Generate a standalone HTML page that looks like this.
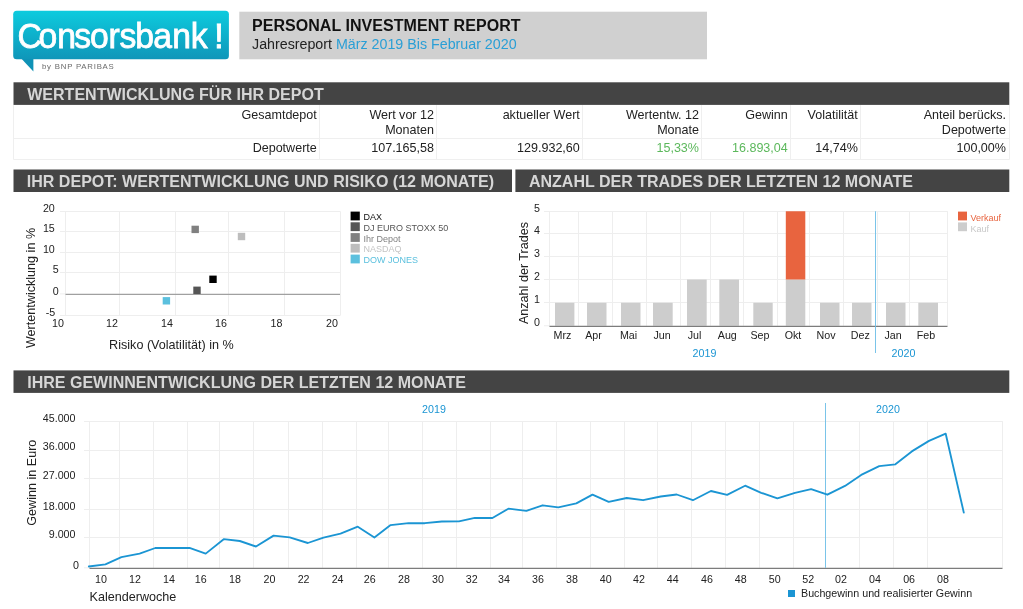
<!DOCTYPE html>
<html lang="de"><head><meta charset="utf-8"><title>Personal Investment Report</title>
<style>
html,body{margin:0;padding:0;background:#fff;}
body{width:1023px;height:609px;overflow:hidden;font-family:"Liberation Sans",Arial,sans-serif;}
svg{display:block;position:absolute;left:0;top:0;will-change:transform;}
text{font-family:"Liberation Sans",Arial,sans-serif;}
.h{font-weight:bold;font-size:16.05px;fill:#d6d6d6;}
.t{font-size:12.55px;fill:#222;}
.g{font-size:12.55px;fill:#5cb85c;}
.ax{font-size:10.7px;fill:#222;}
.al{font-size:12.6px;fill:#222;}
.lg{font-size:9px;}
.yr{font-size:10.7px;fill:#1b95d3;}
</style></head><body>
<svg width="1023" height="609" viewBox="0 0 1023 609">
<defs><linearGradient id="lg1" x1="0" y1="0" x2="0" y2="1"><stop offset="0" stop-color="#0dcbde"/><stop offset="1" stop-color="#0f96b9"/></linearGradient></defs>

<polygon points="20.8,58 33.4,58 33.4,71.6" fill="#0f92b6"/>
<rect x="13.2" y="10.8" width="215.7" height="48.5" rx="3.5" ry="3.5" fill="url(#lg1)"/>
<text transform="translate(0,47.8) scale(0.95,1)" x="18.4 40.6 60.2 78.2 94.7 114.3 125.7 142.4 161.3 181.2 200.9" y="0" font-size="35.5" fill="#fff" stroke="#fff" stroke-width="0.8">Consorsbank</text>
<text x="213.9" y="47.6" font-size="35.5" fill="#fff" stroke="#fff" stroke-width="0.8">!</text>
<text x="42" y="69" font-size="7.8" fill="#6a6a6a" textLength="71.8" lengthAdjust="spacing">by BNP PARIBAS</text>
<rect x="239.3" y="11.7" width="467.7" height="47.6" fill="#d0d0d0"/>
<text x="252" y="31.2" font-size="16" font-weight="bold" fill="#111" letter-spacing="0.05">PERSONAL INVESTMENT REPORT</text>
<text x="252" y="48.8" font-size="14.25" fill="#222">Jahresreport <tspan fill="#2a9fd6">März 2019 Bis Februar 2020</tspan></text>
<rect x="13.5" y="82.3" width="995.8" height="22.6" fill="#444"/>
<text class="h" x="27.2" y="100.2">WERTENTWICKLUNG FÜR IHR DEPOT</text>
<rect x="13.5" y="169.5" width="498.5" height="22.5" fill="#444"/>
<text class="h" x="26.8" y="187.3">IHR DEPOT: WERTENTWICKLUNG UND RISIKO (12 MONATE)</text>
<rect x="515.4" y="169.5" width="493.9" height="22.5" fill="#444"/>
<text class="h" x="528.9" y="187.3">ANZAHL DER TRADES DER LETZTEN 12 MONATE</text>
<rect x="13.5" y="370.4" width="995.8" height="22.5" fill="#444"/>
<text class="h" x="27.2" y="388.2">IHRE GEWINNENTWICKLUNG DER LETZTEN 12 MONATE</text>
<g stroke="#efefef" stroke-width="1" fill="none">
<path d="M13.5,105V159.5H1009.5V105"/>
<line x1="13.5" y1="138.5" x2="1009" y2="138.5"/>
<line x1="319.5" y1="105" x2="319.5" y2="159"/>
<line x1="436.5" y1="105" x2="436.5" y2="159"/>
<line x1="582.5" y1="105" x2="582.5" y2="159"/>
<line x1="701.5" y1="105" x2="701.5" y2="159"/>
<line x1="790.5" y1="105" x2="790.5" y2="159"/>
<line x1="860.5" y1="105" x2="860.5" y2="159"/>
</g>
<text class="t" text-anchor="end" x="316.8" y="118.7">Gesamtdepot</text>
<text class="t" text-anchor="end" x="316.8" y="152">Depotwerte</text>
<text class="t" text-anchor="end" x="434" y="118.7">Wert vor 12</text>
<text class="t" text-anchor="end" x="434" y="133.8">Monaten</text>
<text class="t" text-anchor="end" x="434" y="152">107.165,58</text>
<text class="t" text-anchor="end" x="579.8" y="118.7">aktueller Wert</text>
<text class="t" text-anchor="end" x="579.8" y="152">129.932,60</text>
<text class="t" text-anchor="end" x="699" y="118.7">Wertentw. 12</text>
<text class="t" text-anchor="end" x="699" y="133.8">Monate</text>
<text class="g" text-anchor="end" x="699" y="152">15,33%</text>
<text class="t" text-anchor="end" x="787.8" y="118.7">Gewinn</text>
<text class="g" text-anchor="end" x="787.8" y="152">16.893,04</text>
<text class="t" text-anchor="end" x="857.8" y="118.7">Volatilität</text>
<text class="t" text-anchor="end" x="857.8" y="152">14,74%</text>
<text class="t" text-anchor="end" x="1006" y="118.7">Anteil berücks.</text>
<text class="t" text-anchor="end" x="1006" y="133.8">Depotwerte</text>
<text class="t" text-anchor="end" x="1006" y="152">100,00%</text>
<g stroke="#eeeeee" stroke-width="1">
<line x1="60.0" y1="211.5" x2="340.0" y2="211.5"/>
<line x1="60.0" y1="231.5" x2="340.0" y2="231.5"/>
<line x1="60.0" y1="252.5" x2="340.0" y2="252.5"/>
<line x1="60.0" y1="272.5" x2="340.0" y2="272.5"/>
<line x1="60.0" y1="315.5" x2="340.0" y2="315.5"/>
<line x1="65.5" y1="211.3" x2="65.5" y2="315.6"/>
<line x1="119.5" y1="211.3" x2="119.5" y2="315.6"/>
<line x1="175.5" y1="211.3" x2="175.5" y2="315.6"/>
<line x1="228.5" y1="211.3" x2="228.5" y2="315.6"/>
<line x1="284.5" y1="211.3" x2="284.5" y2="315.6"/>
<line x1="340.5" y1="211.3" x2="340.5" y2="315.6"/>
</g>
<line x1="60.0" y1="293.9" x2="65.5" y2="293.9" stroke="#eeeeee" stroke-width="1"/>
<line x1="65.5" y1="294.3" x2="340.0" y2="294.3" stroke="#a0a0a0" stroke-width="1.15"/>
<text class="ax" text-anchor="end" x="54.8" y="211.9">20</text>
<text class="ax" text-anchor="end" x="54.8" y="231.9">15</text>
<text class="ax" text-anchor="end" x="54.8" y="253.3">10</text>
<text class="ax" text-anchor="end" x="58.8" y="273.4">5</text>
<text class="ax" text-anchor="end" x="58.8" y="294.5">0</text>
<text class="ax" text-anchor="end" x="55.3" y="316.2">-5</text>
<text class="ax" text-anchor="middle" x="58" y="326.5">10</text>
<text class="ax" text-anchor="middle" x="112" y="326.5">12</text>
<text class="ax" text-anchor="middle" x="167" y="326.5">14</text>
<text class="ax" text-anchor="middle" x="221" y="326.5">16</text>
<text class="ax" text-anchor="middle" x="276.5" y="326.5">18</text>
<text class="ax" text-anchor="middle" x="332" y="326.5">20</text>
<text class="al" text-anchor="middle" x="171.4" y="349">Risiko (Volatilität) in %</text>
<text class="al" text-anchor="middle" transform="translate(35.2,288) rotate(-90)">Wertentwicklung in %</text>
<rect x="191.5" y="225.7" width="7.4" height="7.4" fill="#808080"/>
<rect x="237.8" y="232.8" width="7.4" height="7.4" fill="#bdbdbd"/>
<rect x="209.3" y="275.6" width="7.4" height="7.4" fill="#000"/>
<rect x="193.3" y="286.6" width="7.4" height="7.4" fill="#555"/>
<rect x="162.7" y="297.1" width="7.4" height="7.4" fill="#5bc0de"/>
<rect x="350.6" y="211.6" width="9.2" height="8.8" fill="#000"/>
<text class="lg" x="363.5" y="220.2" fill="#111">DAX</text>
<rect x="350.6" y="222.3" width="9.2" height="8.8" fill="#555"/>
<text class="lg" x="363.5" y="230.9" fill="#555">DJ EURO STOXX 50</text>
<rect x="350.6" y="233.1" width="9.2" height="8.8" fill="#808080"/>
<text class="lg" x="363.5" y="241.7" fill="#808080">Ihr Depot</text>
<rect x="350.6" y="243.8" width="9.2" height="8.8" fill="#bdbdbd"/>
<text class="lg" x="363.5" y="252.4" fill="#c4c4c4">NASDAQ</text>
<rect x="350.6" y="254.6" width="9.2" height="8.8" fill="#5bc0de"/>
<text class="lg" x="363.5" y="263.2" fill="#5bc0de">DOW JONES</text>
<g stroke="#eeeeee" stroke-width="1">
<line x1="544.0" y1="211.5" x2="947.5" y2="211.5"/>
<line x1="544.0" y1="233.5" x2="947.5" y2="233.5"/>
<line x1="544.0" y1="256.5" x2="947.5" y2="256.5"/>
<line x1="544.0" y1="279.5" x2="947.5" y2="279.5"/>
<line x1="544.0" y1="302.5" x2="947.5" y2="302.5"/>
<line x1="549.5" y1="211.25" x2="549.5" y2="325.75"/>
<line x1="578.5" y1="211.25" x2="578.5" y2="325.75"/>
<line x1="612.5" y1="211.25" x2="612.5" y2="325.75"/>
<line x1="646.5" y1="211.25" x2="646.5" y2="325.75"/>
<line x1="680.5" y1="211.25" x2="680.5" y2="325.75"/>
<line x1="710.5" y1="211.25" x2="710.5" y2="325.75"/>
<line x1="743.5" y1="211.25" x2="743.5" y2="325.75"/>
<line x1="777.5" y1="211.25" x2="777.5" y2="325.75"/>
<line x1="809.5" y1="211.25" x2="809.5" y2="325.75"/>
<line x1="843.5" y1="211.25" x2="843.5" y2="325.75"/>
<line x1="877.5" y1="211.25" x2="877.5" y2="325.75"/>
<line x1="909.5" y1="211.25" x2="909.5" y2="325.75"/>
<line x1="947.5" y1="211.25" x2="947.5" y2="325.75"/>
</g>
<rect x="555" y="302.75" width="19.4" height="23.00" fill="#cdcdcd"/>
<rect x="587" y="302.75" width="19.5" height="23.00" fill="#cdcdcd"/>
<rect x="621" y="302.75" width="19.5" height="23.00" fill="#cdcdcd"/>
<rect x="653" y="302.75" width="19.7" height="23.00" fill="#cdcdcd"/>
<rect x="687" y="279.5" width="19.7" height="46.25" fill="#cdcdcd"/>
<rect x="719.3" y="279.5" width="19.7" height="46.25" fill="#cdcdcd"/>
<rect x="753.3" y="302.75" width="19.4" height="23.00" fill="#cdcdcd"/>
<rect x="785.8" y="279.5" width="19.5" height="46.25" fill="#cdcdcd"/>
<rect x="820" y="302.75" width="19.5" height="23.00" fill="#cdcdcd"/>
<rect x="852" y="302.75" width="19.5" height="23.00" fill="#cdcdcd"/>
<rect x="886" y="302.75" width="19.5" height="23.00" fill="#cdcdcd"/>
<rect x="918.3" y="302.75" width="19.7" height="23.00" fill="#cdcdcd"/>
<rect x="785.8" y="211.25" width="19.5" height="68.25" fill="#e8643f"/>
<line x1="544.0" y1="325.75" x2="549.5" y2="325.75" stroke="#eeeeee" stroke-width="1"/>
<line x1="549.5" y1="326.4" x2="947.5" y2="326.4" stroke="#7c7c7c" stroke-width="1.1"/>
<line x1="875.5" y1="211.25" x2="875.5" y2="353" stroke="#6bbde6" stroke-width="0.9"/>
<text class="ax" text-anchor="end" x="540" y="211.9">5</text>
<text class="ax" text-anchor="end" x="540" y="233.9">4</text>
<text class="ax" text-anchor="end" x="540" y="257.2">3</text>
<text class="ax" text-anchor="end" x="540" y="280.2">2</text>
<text class="ax" text-anchor="end" x="540" y="303.4">1</text>
<text class="ax" text-anchor="end" x="540" y="326.4">0</text>
<text class="ax" text-anchor="middle" x="562.5" y="339">Mrz</text>
<text class="ax" text-anchor="middle" x="593.5" y="339">Apr</text>
<text class="ax" text-anchor="middle" x="628.5" y="339">Mai</text>
<text class="ax" text-anchor="middle" x="662" y="339">Jun</text>
<text class="ax" text-anchor="middle" x="694.5" y="339">Jul</text>
<text class="ax" text-anchor="middle" x="727.3" y="339">Aug</text>
<text class="ax" text-anchor="middle" x="760" y="339">Sep</text>
<text class="ax" text-anchor="middle" x="793" y="339">Okt</text>
<text class="ax" text-anchor="middle" x="826" y="339">Nov</text>
<text class="ax" text-anchor="middle" x="860.3" y="339">Dez</text>
<text class="ax" text-anchor="middle" x="893" y="339">Jan</text>
<text class="ax" text-anchor="middle" x="926" y="339">Feb</text>
<text class="yr" text-anchor="middle" x="704.5" y="357">2019</text>
<text class="yr" text-anchor="middle" x="903.5" y="357">2020</text>
<text class="al" text-anchor="middle" transform="translate(527.5,273) rotate(-90)">Anzahl der Trades</text>
<rect x="958" y="211.6" width="9" height="8.8" fill="#e8643f"/>
<rect x="958" y="222.4" width="9" height="8.8" fill="#cdcdcd"/>
<text class="lg" x="970.5" y="220.9" fill="#e8643f">Verkauf</text>
<text class="lg" x="970.5" y="231.6" fill="#c8c8c8">Kauf</text>
<g stroke="#eeeeee" stroke-width="1">
<line x1="84.0" y1="421.5" x2="1002.5" y2="421.5"/>
<line x1="84.0" y1="450.5" x2="1002.5" y2="450.5"/>
<line x1="84.0" y1="478.5" x2="1002.5" y2="478.5"/>
<line x1="84.0" y1="509.5" x2="1002.5" y2="509.5"/>
<line x1="84.0" y1="537.5" x2="1002.5" y2="537.5"/>
<line x1="89.5" y1="421.2" x2="89.5" y2="567.8"/>
<line x1="119.5" y1="421.2" x2="119.5" y2="567.8"/>
<line x1="153.5" y1="421.2" x2="153.5" y2="567.8"/>
<line x1="187.5" y1="421.2" x2="187.5" y2="567.8"/>
<line x1="219.5" y1="421.2" x2="219.5" y2="567.8"/>
<line x1="253.5" y1="421.2" x2="253.5" y2="567.8"/>
<line x1="288.5" y1="421.2" x2="288.5" y2="567.8"/>
<line x1="322.5" y1="421.2" x2="322.5" y2="567.8"/>
<line x1="356.5" y1="421.2" x2="356.5" y2="567.8"/>
<line x1="388.5" y1="421.2" x2="388.5" y2="567.8"/>
<line x1="422.5" y1="421.2" x2="422.5" y2="567.8"/>
<line x1="456.5" y1="421.2" x2="456.5" y2="567.8"/>
<line x1="490.5" y1="421.2" x2="490.5" y2="567.8"/>
<line x1="522.5" y1="421.2" x2="522.5" y2="567.8"/>
<line x1="556.5" y1="421.2" x2="556.5" y2="567.8"/>
<line x1="590.5" y1="421.2" x2="590.5" y2="567.8"/>
<line x1="624.5" y1="421.2" x2="624.5" y2="567.8"/>
<line x1="657.5" y1="421.2" x2="657.5" y2="567.8"/>
<line x1="691.5" y1="421.2" x2="691.5" y2="567.8"/>
<line x1="725.5" y1="421.2" x2="725.5" y2="567.8"/>
<line x1="759.5" y1="421.2" x2="759.5" y2="567.8"/>
<line x1="793.5" y1="421.2" x2="793.5" y2="567.8"/>
<line x1="859.5" y1="421.2" x2="859.5" y2="567.8"/>
<line x1="893.5" y1="421.2" x2="893.5" y2="567.8"/>
<line x1="927.5" y1="421.2" x2="927.5" y2="567.8"/>
<line x1="1002.5" y1="421.2" x2="1002.5" y2="567.8"/>
</g>
<line x1="84.0" y1="567.8" x2="89.5" y2="567.8" stroke="#eeeeee" stroke-width="1"/>
<line x1="89.5" y1="568.4" x2="1002.5" y2="568.4" stroke="#7c7c7c" stroke-width="1.1"/>
<line x1="825.5" y1="403" x2="825.5" y2="567.8" stroke="#6bbde6" stroke-width="0.9"/>
<polyline points="88.8,566.5 105.4,564.3 121.4,557.1 139.6,553.6 155.3,548.0 171.9,548.0 189.5,547.9 205.7,553.6 223.7,539.2 239.8,541.0 256.0,546.5 273.6,535.6 289.7,537.4 307.8,543.0 323.5,537.6 340.5,533.7 357.8,526.7 374.4,537.6 390.6,525.1 408.6,523.2 424.8,523.2 441.9,521.5 458.9,521.4 474.8,517.8 492.4,518.0 508.4,508.7 526.4,510.8 542.6,505.3 558.3,507.3 576.3,503.4 592.5,494.6 608.7,501.8 626.7,498.0 643.1,500.2 660.7,496.5 676.7,494.5 692.9,500.2 710.9,491.0 727.1,494.9 745.1,485.7 761.2,492.8 777.4,498.3 795.0,492.8 811.1,489.2 827.4,494.7 845.0,485.9 861.2,474.9 879.2,466.1 895.4,464.3 911.8,451.4 929.0,440.9 945.7,433.7 963.8,512.6" fill="none" stroke="#1b95d3" stroke-width="1.85" stroke-linejoin="round" stroke-linecap="round"/>
<text class="ax" text-anchor="end" x="75.5" y="421.6">45.000</text>
<text class="ax" text-anchor="end" x="75.5" y="450.4">36.000</text>
<text class="ax" text-anchor="end" x="75.5" y="478.6">27.000</text>
<text class="ax" text-anchor="end" x="75.5" y="509.5">18.000</text>
<text class="ax" text-anchor="end" x="75.5" y="537.6">9.000</text>
<text class="ax" text-anchor="end" x="79" y="569">0</text>
<text class="ax" text-anchor="middle" x="100.9" y="582.5">10</text>
<text class="ax" text-anchor="middle" x="134.9" y="582.5">12</text>
<text class="ax" text-anchor="middle" x="168.9" y="582.5">14</text>
<text class="ax" text-anchor="middle" x="200.7" y="582.5">16</text>
<text class="ax" text-anchor="middle" x="234.9" y="582.5">18</text>
<text class="ax" text-anchor="middle" x="269.4" y="582.5">20</text>
<text class="ax" text-anchor="middle" x="303.6" y="582.5">22</text>
<text class="ax" text-anchor="middle" x="337.6" y="582.5">24</text>
<text class="ax" text-anchor="middle" x="369.8" y="582.5">26</text>
<text class="ax" text-anchor="middle" x="403.9" y="582.5">28</text>
<text class="ax" text-anchor="middle" x="437.9" y="582.5">30</text>
<text class="ax" text-anchor="middle" x="471.8" y="582.5">32</text>
<text class="ax" text-anchor="middle" x="503.9" y="582.5">34</text>
<text class="ax" text-anchor="middle" x="537.9" y="582.5">36</text>
<text class="ax" text-anchor="middle" x="571.9" y="582.5">38</text>
<text class="ax" text-anchor="middle" x="605.8" y="582.5">40</text>
<text class="ax" text-anchor="middle" x="638.9" y="582.5">42</text>
<text class="ax" text-anchor="middle" x="672.8" y="582.5">44</text>
<text class="ax" text-anchor="middle" x="707.0" y="582.5">46</text>
<text class="ax" text-anchor="middle" x="740.8" y="582.5">48</text>
<text class="ax" text-anchor="middle" x="774.8" y="582.5">50</text>
<text class="ax" text-anchor="middle" x="808.2" y="582.5">52</text>
<text class="ax" text-anchor="middle" x="841.0" y="582.5">02</text>
<text class="ax" text-anchor="middle" x="874.9" y="582.5">04</text>
<text class="ax" text-anchor="middle" x="909.1" y="582.5">06</text>
<text class="ax" text-anchor="middle" x="942.9" y="582.5">08</text>
<text class="al" x="89.5" y="601">Kalenderwoche</text>
<text class="al" text-anchor="middle" transform="translate(36,482.7) rotate(-90)">Gewinn in Euro</text>
<text class="yr" text-anchor="middle" x="434" y="412.5">2019</text>
<text class="yr" text-anchor="middle" x="888" y="412.5">2020</text>
<rect x="788" y="590" width="7" height="7" fill="#1b95d3"/>
<text class="ax" x="801" y="597">Buchgewinn und realisierter Gewinn</text>
</svg></body></html>
